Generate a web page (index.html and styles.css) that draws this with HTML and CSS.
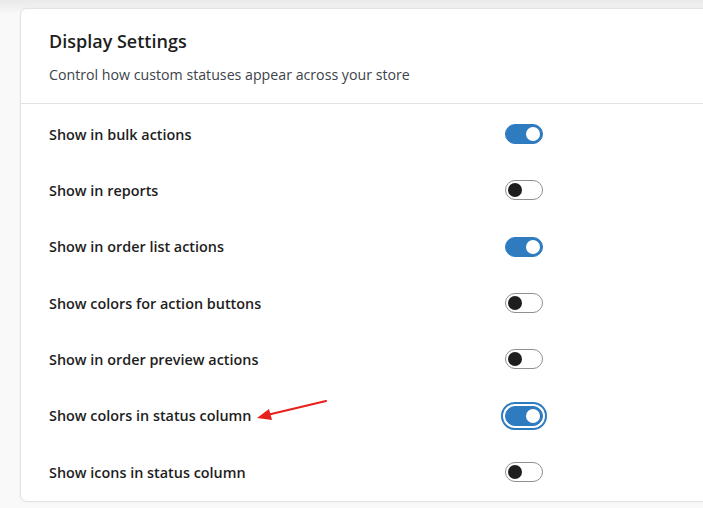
FILE: index.html
```html
<!DOCTYPE html>
<html>
<head>
<meta charset="utf-8">
<link rel="stylesheet" href="styles.css">
</head>
<body>
<div class="page">
  <section class="card">
    <header class="card-head">
      <h2 class="title">Display Settings</h2>
      <p class="subtitle">Control how custom statuses appear across your store</p>
    </header>
    <div class="rows">
      <div class="row"><span class="label">Show in bulk actions</span><span class="toggle on"></span></div>
      <div class="row"><span class="label">Show in reports</span><span class="toggle"></span></div>
      <div class="row"><span class="label">Show in order list actions</span><span class="toggle on"></span></div>
      <div class="row"><span class="label">Show colors for action buttons</span><span class="toggle"></span></div>
      <div class="row"><span class="label">Show in order preview actions</span><span class="toggle"></span></div>
      <div class="row"><span class="label">Show colors in status column</span><span class="toggle on focus"></span></div>
      <div class="row"><span class="label">Show icons in status column</span><span class="toggle"></span></div>
    </div>
    <svg class="arrow" width="90" height="40" viewBox="0 0 90 40">
      <line x1="71" y1="4" x2="12" y2="18" stroke="#e8201c" stroke-width="2.2" stroke-linecap="round"/>
      <polygon points="2,21 14,12 17,23" fill="#e8201c"/>
    </svg>
  </section>
</div>
</body>
</html>
```
FILE: styles.css
```css
html, body {
  margin: 0;
  padding: 0;
}
body {
  width: 703px;
  height: 508px;
  overflow: hidden;
  background: linear-gradient(to bottom, #e9e9e9 0px, #efefef 6px, #f9f9f9 14px, #f9f9f9 100%);
  font-family: "Open Sans", "Noto Sans", sans-serif;
  color: #1e1e1e;
}
.page {
  width: 703px;
  overflow: hidden;
  padding: 8px 0 7px 20px;
  box-sizing: border-box;
}
.card {
  position: relative;
  width: 700px;
  height: 494px;
  box-sizing: border-box;
  background: #fff;
  border: 1px solid #e2e2e2;
  border-radius: 7px;
  box-shadow: 0 0 3px rgba(0,0,0,0.04);
}
.card-head {
  height: 95px;
  box-sizing: border-box;
  padding: 20px 0 0 28px;
  border-bottom: 1px solid #e2e2e2;
}
.title {
  margin: 0;
  font-size: 18px;
  font-weight: 600;
  line-height: 24px;
  color: #1e1e1e;
}
.subtitle {
  margin: 12px 0 0;
  font-size: 14.2px;
  line-height: 20px;
  color: #3c434a;
}
.rows {
  padding-top: 2px;
}
.row {
  display: flex;
  align-items: center;
  height: 56.33px;
  padding-left: 28px;
}
.label {
  width: 456px;
  font-size: 14.4px;
  font-weight: 600;
  color: #1e1e1e;
}
.toggle {
  position: relative;
  width: 38px;
  height: 20px;
  box-sizing: border-box;
  border: 1px solid #8c8f94;
  border-radius: 10px;
  background: #fff;
}
.toggle::after {
  content: "";
  position: absolute;
  top: 2px;
  left: 2px;
  width: 14px;
  height: 14px;
  border-radius: 50%;
  background: #1e1e1e;
}
.toggle.on {
  background: #2f7bbf;
  border-color: #2f7bbf;
}
.toggle.on::after {
  left: auto;
  right: 2px;
  background: #fff;
}
.toggle.focus {
  box-shadow: 0 0 0 2px #fff, 0 0 0 4px #2f7bbf;
}
.arrow {
  position: absolute;
  left: 234px;
  top: 388px;
}
```
